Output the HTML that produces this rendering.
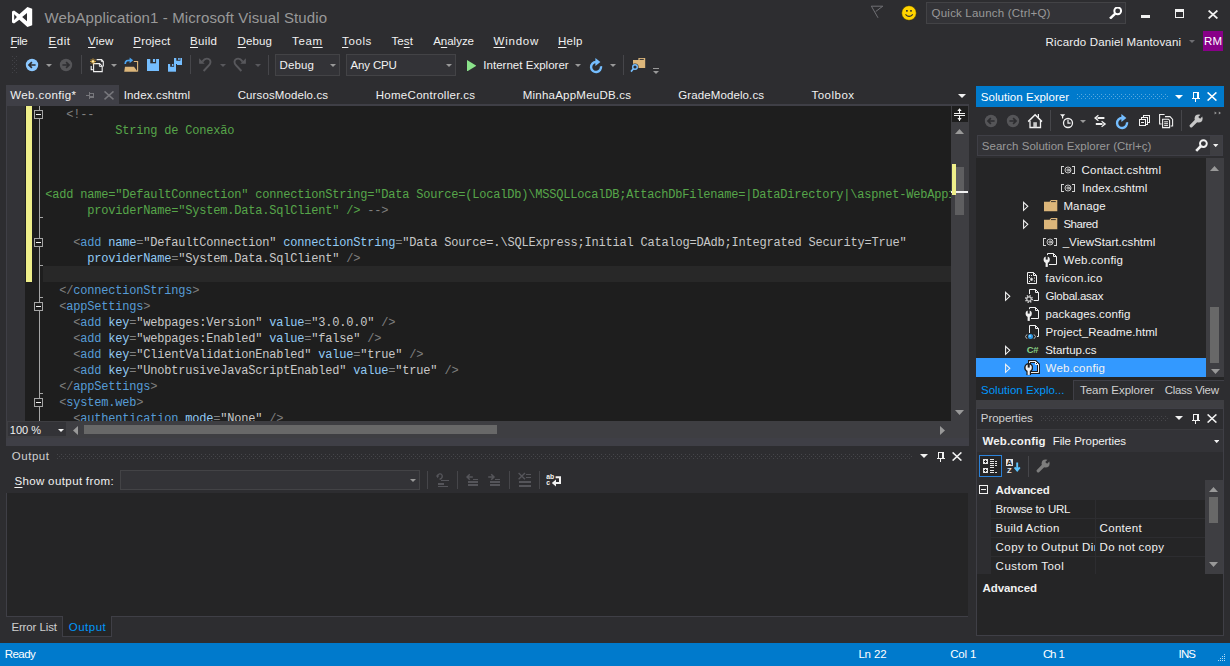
<!DOCTYPE html>
<html><head><meta charset="utf-8"><title>WebApplication1 - Microsoft Visual Studio</title>
<style>
html,body{margin:0;padding:0;background:#2d2d30;}
body{width:1230px;height:666px;position:relative;overflow:hidden;font-family:"Liberation Sans",sans-serif;}
.t{position:absolute;white-space:pre;font-family:"Liberation Sans",sans-serif;}
.r{position:absolute;display:block;}
.c{position:absolute;white-space:pre;font-family:"Liberation Mono",monospace;font-size:12px;line-height:16px;letter-spacing:-0.2px;height:16px;}
u{text-decoration:underline;text-underline-offset:1.5px;text-decoration-thickness:1px;}
.g{color:#808080}.e{color:#569cd6}.a{color:#92caf4}.v{color:#c8c8c8}.k{color:#57a64a}
</style></head><body>
<svg class="r" style="left:12px;top:7px" width="21" height="21" viewBox="0 0 21 21"><path d="M15.4 0 L20.2 1.8 V18.2 L15.4 20 L7.3 12.7 L2 16.5 L0 15.5 V4.5 L2 3.5 L7.3 7.3 Z M2.2 7.2 V13 L4.9 10.1 Z M10.2 10.1 L15 6 V14.2 Z" fill="#fff" fill-rule="evenodd"/></svg>
<span class="t" style="left:44.50px;top:9.80px;font-size:15px;line-height:15px;color:#999999;letter-spacing:0.114px;word-spacing:0.008px;">WebApplication1 - Microsoft Visual Studio</span>
<svg class="r" style="left:870px;top:5px" width="14" height="14" viewBox="0 0 14 14"><path d="M1.2 1.2 H12.8 L5.7 6.5 M1.4 1.2 L8 12.8" fill="none" stroke="#707074" stroke-width="1"/></svg>
<svg class="r" style="left:901px;top:5px" width="16" height="16" viewBox="0 0 16 16"><circle cx="8" cy="8" r="7.3" fill="#ffd400" stroke="#3a3000" stroke-width="0.5"/><rect x="5.1" y="5" width="1.6" height="1.7" fill="#2d2d30"/><rect x="9.2" y="5" width="1.6" height="1.7" fill="#2d2d30"/><path d="M4.5 9.3 Q8 13.4 11.8 9.3" stroke="#2d2d30" stroke-width="1.1" fill="none"/></svg>
<div class="r" style="left:926px;top:2px;width:200px;height:22px;background:#333337;box-sizing:border-box;border:1px solid #434346;"></div>
<span class="t" style="left:931.60px;top:8.47px;font-size:11.5px;line-height:11.5px;color:#999999;letter-spacing:0.216px;word-spacing:-0.123px;">Quick Launch (Ctrl+Q)</span>
<svg class="r" style="left:1109px;top:7px" width="13" height="12" viewBox="0 0 13 12"><circle cx="8.7" cy="3.9" r="3.4" fill="none" stroke="#fff" stroke-width="1.9"/><path d="M6.2 6.6 L1 11.6" stroke="#fff" stroke-width="2.5" stroke-linecap="butt"/></svg>
<div class="r" style="left:1141px;top:15px;width:9px;height:3px;background:#f1f1f1;"></div>
<div class="r" style="left:1175px;top:9px;width:9px;height:9px;background:transparent;box-sizing:border-box;border:1px solid #f1f1f1;border-top-width:3px;"></div>
<svg class="r" style="left:1208px;top:9.5px" width="10" height="9" viewBox="0 0 10 9"><path d="M0.6 0.5 L9.4 8.5 M9.4 0.5 L0.6 8.5" stroke="#f1f1f1" stroke-width="1.7"/></svg>
<span class="t" style="left:10.50px;top:35.67px;font-size:11.5px;line-height:11.5px;color:#f1f1f1;letter-spacing:-0.475px;"><u>F</u>ile</span>
<span class="t" style="left:48.50px;top:35.67px;font-size:11.5px;line-height:11.5px;color:#f1f1f1;letter-spacing:0.562px;"><u>E</u>dit</span>
<span class="t" style="left:88.00px;top:35.67px;font-size:11.5px;line-height:11.5px;color:#f1f1f1;letter-spacing:0.184px;"><u>V</u>iew</span>
<span class="t" style="left:133.30px;top:35.67px;font-size:11.5px;line-height:11.5px;color:#f1f1f1;letter-spacing:0.202px;"><u>P</u>roject</span>
<span class="t" style="left:190.00px;top:35.67px;font-size:11.5px;line-height:11.5px;color:#f1f1f1;letter-spacing:0.356px;"><u>B</u>uild</span>
<span class="t" style="left:237.50px;top:35.67px;font-size:11.5px;line-height:11.5px;color:#f1f1f1;letter-spacing:0.152px;"><u>D</u>ebug</span>
<span class="t" style="left:292.00px;top:35.67px;font-size:11.5px;line-height:11.5px;color:#f1f1f1;letter-spacing:0.628px;">Tea<u>m</u></span>
<span class="t" style="left:342.00px;top:35.67px;font-size:11.5px;line-height:11.5px;color:#f1f1f1;letter-spacing:0.615px;"><u>T</u>ools</span>
<span class="t" style="left:391.50px;top:35.67px;font-size:11.5px;line-height:11.5px;color:#f1f1f1;letter-spacing:0.070px;">Te<u>s</u>t</span>
<span class="t" style="left:433.20px;top:35.67px;font-size:11.5px;line-height:11.5px;color:#f1f1f1;letter-spacing:-0.019px;">A<u>n</u>alyze</span>
<span class="t" style="left:493.50px;top:35.67px;font-size:11.5px;line-height:11.5px;color:#f1f1f1;letter-spacing:0.774px;"><u>W</u>indow</span>
<span class="t" style="left:558.00px;top:35.67px;font-size:11.5px;line-height:11.5px;color:#f1f1f1;letter-spacing:0.282px;"><u>H</u>elp</span>
<span class="t" style="left:1045.60px;top:36.57px;font-size:11.5px;line-height:11.5px;color:#f1f1f1;letter-spacing:0.169px;word-spacing:-0.076px;">Ricardo Daniel Mantovani</span>
<svg class="r" style="left:1189px;top:40px" width="6" height="3" viewBox="0 0 6 3"><path d="M0 0H6L3.0 3Z" fill="#6e6e72"/></svg>
<div class="r" style="left:1203px;top:31px;width:20px;height:20px;background:#880088;"></div>
<span class="t" style="left:1204.00px;top:35.87px;font-size:11.5px;line-height:11.5px;color:#fff;letter-spacing:0.117px;">RM</span>
<svg class="r" style="left:12px;top:56px" width="5" height="17"><defs><pattern id="gp1" width="4" height="4" patternUnits="userSpaceOnUse"><rect x="0" y="0" width="1" height="1" fill="#424247"/><rect x="2" y="2" width="1" height="1" fill="#424247"/></pattern></defs><rect width="5" height="17" fill="url(#gp1)"/></svg>
<svg class="r" style="left:25.1px;top:57.7px" width="14" height="14" viewBox="0 0 14 14"><circle cx="7" cy="7" r="6.2" fill="#8cc8ff"/><path d="M10.6 7 H4.2 M6.9 4.2 L4 7 L6.9 9.8" stroke="#2d2d30" stroke-width="1.7" fill="none"/></svg>
<svg class="r" style="left:46px;top:64px" width="6" height="3" viewBox="0 0 6 3"><path d="M0 0H6L3.0 3Z" fill="#999"/></svg>
<svg class="r" style="left:58.900000000000006px;top:57.7px" width="14" height="14" viewBox="0 0 14 14"><circle cx="7" cy="7" r="6.2" fill="#555558"/><path d="M3.4 7 H9.8 M7.1 4.2 L10 7 L7.1 9.8" stroke="#2d2d30" stroke-width="1.7" fill="none"/></svg>
<div class="r" style="left:81px;top:55px;width:1px;height:19px;background:#46464a;"></div>
<svg class="r" style="left:89px;top:57px" width="16" height="16" viewBox="0 0 16 16"><g fill="none" stroke="#f1f1f1" stroke-width="1.1"><path d="M7.6 2.6 H12.6 L14.3 4.4 V9.6"/><path d="M12.4 2.8 V4.6 H14.2" stroke-width="0.9"/><path d="M4.6 6.6 H10.6 L13.2 9.2 V14.6 H4.6 Z"/><path d="M10.4 6.8 V9.4 H13" stroke-width="0.9"/><path d="M3.8 12.6 H2.2 V9"/></g><path d="M4 1.4 V7.4 M1 4.4 H7 M1.9 2.3 L6.1 6.5 M6.1 2.3 L1.9 6.5" stroke="#e0a838" stroke-width="0.9"/><circle cx="4" cy="4.4" r="1.2" fill="#ffe9a8"/></svg>
<svg class="r" style="left:111px;top:64px" width="6" height="3" viewBox="0 0 6 3"><path d="M0 0H6L3.0 3Z" fill="#999"/></svg>
<svg class="r" style="left:123px;top:57px" width="16" height="16" viewBox="0 0 16 16"><path d="M10.8 4.5 H14.6 V14.4" fill="none" stroke="#dcb67a" stroke-width="1.1"/><path d="M2 9.8 H11 L14.7 14.8 H1.2 Z" fill="#dcb67a"/><path d="M2.2 7 C2.2 3.6 4.4 3.2 7.4 3.3" fill="none" stroke="#4aa3f0" stroke-width="1.7"/><path d="M6.6 0.4 L10.2 3.3 L6.6 6.2 Z" fill="#4aa3f0"/></svg>
<svg class="r" style="left:147px;top:59.2px" width="12.1" height="12" viewBox="0 0 12.1 12"><rect x="0" y="0" width="12.1" height="12" fill="#75beff"/><rect x="3.267" y="0" width="5.808" height="4.32" fill="#2d2d30"/><rect x="5.928999999999999" y="0" width="2.178" height="3.0" fill="#75beff"/></svg>
<svg class="r" style="left:173.9px;top:57.8px" width="8.5" height="7.6" viewBox="0 0 8.5 7.6"><rect x="0" y="0" width="8.5" height="7.6" fill="#75beff"/><rect x="2.295" y="0" width="4.08" height="2.7359999999999998" fill="#2d2d30"/><rect x="4.165" y="0" width="1.53" height="1.9" fill="#75beff"/></svg>
<div class="r" style="left:173.5px;top:63.6px;width:3px;height:2px;background:#2d2d30;"></div>
<svg class="r" style="left:168px;top:64px" width="8.1" height="7.7" viewBox="0 0 8.1 7.7"><rect x="0" y="0" width="8.1" height="7.7" fill="#75beff"/><rect x="2.187" y="0" width="3.888" height="2.772" fill="#2d2d30"/><rect x="3.969" y="0" width="1.458" height="1.925" fill="#75beff"/></svg>
<div class="r" style="left:190px;top:55px;width:1px;height:19px;background:#46464a;"></div>
<svg class="r" style="left:198px;top:57px" width="14" height="15" viewBox="0 0 14 15"><path d="M1.1 1.2 V6.8 H6.7 Z" fill="#58585c"/><path d="M4.4 4.6 C6 2.2 8.4 1.3 10.2 1.9 C12.6 2.7 13 5.2 11.8 7.2 C10.6 9 8 11.4 5.6 14" fill="none" stroke="#58585c" stroke-width="1.9"/></svg>
<svg class="r" style="left:220px;top:64px" width="6" height="3" viewBox="0 0 6 3"><path d="M0 0H6L3.0 3Z" fill="#58585c"/></svg>
<svg class="r" style="left:233px;top:57px" width="14" height="15" viewBox="0 0 14 15"><path d="M12.9 1.2 V6.8 H7.3 Z" fill="#58585c"/><path d="M9.6 4.6 C8 2.2 5.6 1.3 3.8 1.9 C1.4 2.7 1 5.2 2.2 7.2 C3.4 9 6 11.4 8.4 14" fill="none" stroke="#58585c" stroke-width="1.9"/></svg>
<svg class="r" style="left:255px;top:64px" width="6" height="3" viewBox="0 0 6 3"><path d="M0 0H6L3.0 3Z" fill="#58585c"/></svg>
<div class="r" style="left:267.5px;top:55px;width:1px;height:20px;background:#46464a;"></div>
<div class="r" style="left:275px;top:54px;width:65px;height:22px;background:#333337;box-sizing:border-box;border:1px solid #434346;"></div>
<span class="t" style="left:279.50px;top:59.67px;font-size:11.5px;line-height:11.5px;color:#f1f1f1;letter-spacing:0.102px;">Debug</span>
<svg class="r" style="left:330px;top:64px" width="6" height="3" viewBox="0 0 6 3"><path d="M0 0H6L3.0 3Z" fill="#999"/></svg>
<div class="r" style="left:346px;top:54px;width:110px;height:22px;background:#333337;box-sizing:border-box;border:1px solid #434346;"></div>
<span class="t" style="left:350.60px;top:59.77px;font-size:11.5px;line-height:11.5px;color:#f1f1f1;letter-spacing:-0.256px;word-spacing:0.349px;">Any CPU</span>
<svg class="r" style="left:446px;top:64px" width="6" height="3" viewBox="0 0 6 3"><path d="M0 0H6L3.0 3Z" fill="#999"/></svg>
<svg class="r" style="left:466.5px;top:59.5px" width="9.5" height="11.5" viewBox="0 0 9.5 11.5"><path d="M0 0 L9.5 5.75 L0 11.5 Z" fill="#8ae28a"/></svg>
<span class="t" style="left:483.30px;top:59.77px;font-size:11.5px;line-height:11.5px;color:#f1f1f1;letter-spacing:0.019px;word-spacing:0.074px;">Internet Explorer</span>
<svg class="r" style="left:575px;top:64px" width="6" height="3" viewBox="0 0 6 3"><path d="M0 0H6L3.0 3Z" fill="#999"/></svg>
<svg class="r" style="left:588px;top:57.400000000000006px" width="16" height="17" viewBox="0 -1 16 17"><path d="M13.0 8.2 A5 5 0 1 1 8 4" fill="none" stroke="#75beff" stroke-width="2.4"/><path d="M7.4 0 L12.4 4 L7.4 8 Z" fill="#75beff"/></svg>
<svg class="r" style="left:610px;top:64px" width="6" height="3" viewBox="0 0 6 3"><path d="M0 0H6L3.0 3Z" fill="#999"/></svg>
<div class="r" style="left:623px;top:55px;width:1px;height:20px;background:#46464a;"></div>
<svg class="r" style="left:630px;top:57px" width="17" height="16" viewBox="0 0 17 16"><path d="M3 3 H8.4 V1.1 H15.2 V10.9 H3 Z" fill="#dcb67a"/><path d="M9.6 2.4 H13.8" stroke="#2d2d30" stroke-width="1"/><circle cx="5" cy="10" r="3.6" fill="#2d2d30"/><circle cx="5" cy="10" r="2.3" fill="#2d2d30" stroke="#75beff" stroke-width="1.4"/><path d="M3.4 11.8 L1 14.6" stroke="#75beff" stroke-width="1.7"/></svg>
<div class="r" style="left:653px;top:68px;width:6px;height:1px;background:#999;"></div>
<svg class="r" style="left:653px;top:71px" width="6" height="3" viewBox="0 0 6 3"><path d="M0 0H6L3.0 3Z" fill="#999"/></svg>
<div class="r" style="left:6px;top:85px;width:113px;height:19px;background:#3f3f46;"></div>
<div class="r" style="left:6px;top:104px;width:963px;height:2px;background:#3f3f46;"></div>
<span class="t" style="left:10.30px;top:90.17px;font-size:11.5px;line-height:11.5px;color:#f1f1f1;letter-spacing:0.390px;">Web.config*</span>
<svg class="r" style="left:86px;top:92px" width="8" height="7" viewBox="0 0 8 7"><g fill="#77777c" shape-rendering="crispEdges"><rect x="0" y="3" width="3" height="1"/><rect x="3" y="0" width="1" height="7"/><rect x="4" y="1" width="4" height="1"/><rect x="7" y="1" width="1" height="5"/><rect x="4" y="4" width="4" height="2"/></g></svg>
<svg class="r" style="left:104px;top:91px" width="10" height="9" viewBox="0 0 10 9"><path d="M0.5 0.4 L9.5 8.4 M9.5 0.4 L0.5 8.4" stroke="#77777c" stroke-width="1.5"/></svg>
<span class="t" style="left:123.70px;top:90.17px;font-size:11.5px;line-height:11.5px;color:#f1f1f1;letter-spacing:0.159px;">Index.cshtml</span>
<span class="t" style="left:237.70px;top:90.17px;font-size:11.5px;line-height:11.5px;color:#f1f1f1;letter-spacing:0.104px;">CursosModelo.cs</span>
<span class="t" style="left:375.70px;top:90.17px;font-size:11.5px;line-height:11.5px;color:#f1f1f1;letter-spacing:0.295px;">HomeController.cs</span>
<span class="t" style="left:522.70px;top:90.17px;font-size:11.5px;line-height:11.5px;color:#f1f1f1;letter-spacing:0.232px;">MinhaAppMeuDB.cs</span>
<span class="t" style="left:678.30px;top:90.17px;font-size:11.5px;line-height:11.5px;color:#f1f1f1;letter-spacing:0.102px;">GradeModelo.cs</span>
<span class="t" style="left:811.50px;top:90.17px;font-size:11.5px;line-height:11.5px;color:#f1f1f1;letter-spacing:0.477px;">Toolbox</span>
<svg class="r" style="left:958px;top:94px" width="8" height="4" viewBox="0 0 8 4"><path d="M0 0H8L4.0 4Z" fill="#f1f1f1"/></svg>
<div class="r" style="left:6px;top:106px;width:945px;height:315px;background:#1e1e1e;"></div>
<div class="r" style="left:6px;top:106px;width:1px;height:315px;background:#3f3f46;"></div>
<div class="r" style="left:7px;top:106px;width:18px;height:315px;background:#333337;"></div>
<div class="r" style="left:26px;top:106px;width:6px;height:176px;background:#efef8a;"></div>
<div class="r" style="left:43px;top:266px;width:908px;height:16px;background:#282828;"></div>
<div class="r" style="left:39px;top:106px;width:1px;height:315px;background:#a5a5a5;"></div>
<div class="r" style="left:39px;top:217px;width:4px;height:1px;background:#a5a5a5;"></div>
<div class="r" style="left:39px;top:265px;width:4px;height:1px;background:#a5a5a5;"></div>
<div class="r" style="left:39px;top:297px;width:4px;height:1px;background:#a5a5a5;"></div>
<div class="r" style="left:39px;top:393px;width:4px;height:1px;background:#a5a5a5;"></div>
<div class="r" style="left:34px;top:110px;width:9px;height:9px;background:#1e1e1e;box-sizing:border-box;border:1px solid #a5a5a5;"></div>
<div class="r" style="left:36px;top:113.5px;width:5px;height:1.6px;background:#f1f1f1;"></div>
<div class="r" style="left:34px;top:238px;width:9px;height:9px;background:#1e1e1e;box-sizing:border-box;border:1px solid #a5a5a5;"></div>
<div class="r" style="left:36px;top:241.5px;width:5px;height:1.6px;background:#f1f1f1;"></div>
<div class="r" style="left:34px;top:302px;width:9px;height:9px;background:#1e1e1e;box-sizing:border-box;border:1px solid #a5a5a5;"></div>
<div class="r" style="left:36px;top:305.5px;width:5px;height:1.6px;background:#f1f1f1;"></div>
<div class="r" style="left:34px;top:398px;width:9px;height:9px;background:#1e1e1e;box-sizing:border-box;border:1px solid #a5a5a5;"></div>
<div class="r" style="left:36px;top:401.5px;width:5px;height:1.6px;background:#f1f1f1;"></div>
<div class="c" style="left:66.20px;top:107px;"><span class="g">&lt;!--</span></div>
<div class="c" style="left:115.20px;top:123px;"><span class="k">String de Conexão</span></div>
<div class="c" style="left:45.20px;top:187px;width:905.8px;overflow:hidden;"><span class="k">&lt;add name=&quot;DefaultConnection&quot; connectionString=&quot;Data Source=(LocalDb)\MSSQLLocalDB;AttachDbFilename=|DataDirectory|\aspnet-WebApp1-20150420</span></div>
<div class="c" style="left:87.20px;top:203px;"><span class="k">providerName=&quot;System.Data.SqlClient&quot; /&gt;</span><span class="g"> --&gt;</span></div>
<div class="c" style="left:73.20px;top:235px;"><span class="g">&lt;</span><span class="e">add</span> <span class="a">name</span><span class="g">=</span><span class="v">&quot;DefaultConnection&quot;</span> <span class="a">connectionString</span><span class="g">=</span><span class="v">&quot;Data Source=.\SQLExpress;Initial Catalog=DAdb;Integrated Security=True&quot;</span></div>
<div class="c" style="left:87.20px;top:251px;"><span class="a">providerName</span><span class="g">=</span><span class="v">&quot;System.Data.SqlClient&quot;</span><span class="g"> /&gt;</span></div>
<div class="c" style="left:59.20px;top:283px;"><span class="g">&lt;/</span><span class="e">connectionStrings</span><span class="g">&gt;</span></div>
<div class="c" style="left:59.20px;top:299px;"><span class="g">&lt;</span><span class="e">appSettings</span><span class="g">&gt;</span></div>
<div class="c" style="left:73.20px;top:315px;"><span class="g">&lt;</span><span class="e">add</span> <span class="a">key</span><span class="g">=</span><span class="v">&quot;webpages:Version&quot;</span> <span class="a">value</span><span class="g">=</span><span class="v">&quot;3.0.0.0&quot;</span><span class="g"> /&gt;</span></div>
<div class="c" style="left:73.20px;top:331px;"><span class="g">&lt;</span><span class="e">add</span> <span class="a">key</span><span class="g">=</span><span class="v">&quot;webpages:Enabled&quot;</span> <span class="a">value</span><span class="g">=</span><span class="v">&quot;false&quot;</span><span class="g"> /&gt;</span></div>
<div class="c" style="left:73.20px;top:347px;"><span class="g">&lt;</span><span class="e">add</span> <span class="a">key</span><span class="g">=</span><span class="v">&quot;ClientValidationEnabled&quot;</span> <span class="a">value</span><span class="g">=</span><span class="v">&quot;true&quot;</span><span class="g"> /&gt;</span></div>
<div class="c" style="left:73.20px;top:363px;"><span class="g">&lt;</span><span class="e">add</span> <span class="a">key</span><span class="g">=</span><span class="v">&quot;UnobtrusiveJavaScriptEnabled&quot;</span> <span class="a">value</span><span class="g">=</span><span class="v">&quot;true&quot;</span><span class="g"> /&gt;</span></div>
<div class="c" style="left:59.20px;top:379px;"><span class="g">&lt;/</span><span class="e">appSettings</span><span class="g">&gt;</span></div>
<div class="c" style="left:59.20px;top:395px;"><span class="g">&lt;</span><span class="e">system.web</span><span class="g">&gt;</span></div>
<div class="c" style="left:73.20px;top:411px;"><span class="g">&lt;</span><span class="e">authentication</span> <span class="a">mode</span><span class="g">=</span><span class="v">&quot;None&quot;</span><span class="g"> /&gt;</span></div>
<div class="r" style="left:6px;top:421px;width:963px;height:25px;background:#3e3e42;"></div>
<div class="r" style="left:6px;top:438px;width:963px;height:8px;background:#3f3f46;"></div>
<div class="r" style="left:951px;top:106px;width:18px;height:315px;background:#3e3e42;"></div>
<div class="r" style="left:952px;top:106px;width:16px;height:16px;background:#1e1e1e;"></div>
<svg class="r" style="left:954px;top:108px" width="12" height="13" viewBox="0 0 12 13"><path d="M0 5.5 H11 M0 7.5 H11 M5.5 0.5 V5 M5.5 8 V12.5" stroke="#f1f1f1" stroke-width="1" shape-rendering="crispEdges"/><path d="M3.3 3 L5.5 0.3 L7.7 3 Z M3.3 10 L5.5 12.7 L7.7 10 Z" fill="#f1f1f1"/></svg>
<svg class="r" style="left:955px;top:129px" width="9" height="5" viewBox="0 0 9 5"><path d="M0 5 L4.5 0 L9 5 Z" fill="#999"/></svg>
<svg class="r" style="left:955px;top:410px" width="9" height="5" viewBox="0 0 9 5"><path d="M0 0 L4.5 5 L9 0 Z" fill="#999"/></svg>
<div class="r" style="left:955px;top:167px;width:9px;height:48px;background:#5e5e60;"></div>
<div class="r" style="left:952px;top:164px;width:4px;height:31px;background:#efef8a;"></div>
<div class="r" style="left:951px;top:191px;width:17px;height:2px;background:#f1f1f1;"></div>
<div class="r" style="left:952px;top:191px;width:4px;height:2px;background:#efef8a;"></div>
<div class="r" style="left:8px;top:422px;width:58px;height:14px;background:#333337;"></div>
<span class="t" style="left:9.80px;top:425.29px;font-size:11px;line-height:11px;color:#f1f1f1;letter-spacing:-0.025px;word-spacing:0.114px;">100 %</span>
<svg class="r" style="left:58px;top:429px" width="6" height="3" viewBox="0 0 6 3"><path d="M0 0H6L3.0 3Z" fill="#f1f1f1"/></svg>
<svg class="r" style="left:73px;top:425.5px" width="5" height="9" viewBox="0 0 5 9"><path d="M5 0 L0 4.5 L5 9 Z" fill="#999"/></svg>
<svg class="r" style="left:940px;top:425.5px" width="5" height="9" viewBox="0 0 5 9"><path d="M0 0 L5 4.5 L0 9 Z" fill="#999"/></svg>
<div class="r" style="left:84px;top:425px;width:413px;height:9px;background:#686868;"></div>
<div class="r" style="left:6px;top:446px;width:962px;height:171px;background:#2d2d30;"></div>
<span class="t" style="left:11.80px;top:451.37px;font-size:11.5px;line-height:11.5px;color:#d0d0d0;letter-spacing:0.535px;">Output</span>
<svg class="r" style="left:57px;top:454px" width="855" height="5"><defs><pattern id="gp2" width="4" height="4" patternUnits="userSpaceOnUse"><rect x="0" y="0" width="1" height="1" fill="#46464a"/><rect x="2" y="2" width="1" height="1" fill="#46464a"/></pattern></defs><rect width="855" height="5" fill="url(#gp2)"/></svg>
<svg class="r" style="left:920px;top:454px" width="8" height="4" viewBox="0 0 8 4"><path d="M0 0H8L4.0 4Z" fill="#f1f1f1"/></svg>
<svg class="r" style="left:937px;top:452px" width="8" height="10" viewBox="0 0 8 10"><g fill="#f1f1f1" shape-rendering="crispEdges"><rect x="1" y="0" width="6" height="1"/><rect x="1" y="0" width="1" height="6"/><rect x="5" y="0" width="2" height="6"/><rect x="0" y="6" width="8" height="1"/><rect x="3" y="7" width="1" height="3.6"/></g></svg>
<svg class="r" style="left:952.3px;top:451.8px" width="10" height="9" viewBox="0 0 10 9"><path d="M0.6 0.4 L9.4 8.6 M9.4 0.4 L0.6 8.6" stroke="#f1f1f1" stroke-width="1.5"/></svg>
<span class="t" style="left:14.40px;top:475.67px;font-size:11.5px;line-height:11.5px;color:#f1f1f1;letter-spacing:0.414px;word-spacing:-0.321px;"><u>S</u>how output from:</span>
<div class="r" style="left:120px;top:470px;width:300px;height:20px;background:#333337;box-sizing:border-box;border:1px solid #434346;"></div>
<svg class="r" style="left:410px;top:479px" width="6" height="3" viewBox="0 0 6 3"><path d="M0 0H6L3.0 3Z" fill="#999"/></svg>
<div class="r" style="left:427px;top:471px;width:1px;height:18px;background:#46464a;"></div>
<div class="r" style="left:457px;top:471px;width:1px;height:18px;background:#46464a;"></div>
<div class="r" style="left:509px;top:471px;width:1px;height:18px;background:#46464a;"></div>
<div class="r" style="left:539px;top:471px;width:1px;height:18px;background:#46464a;"></div>
<svg class="r" style="left:436px;top:472px" width="14" height="16" viewBox="0 0 14 16"><path d="M1.2 4.6 C1.6 1.4 5.4 0.8 6.2 3.6 C6.6 5.2 5.4 6.6 3.6 7.4" fill="none" stroke="#55555a" stroke-width="1.3"/><path d="M0 3.6 H3.2 L1.6 6.2 Z" fill="#55555a"/><g shape-rendering="crispEdges" stroke="#55555a"><path d="M5 8.5 H13" stroke-width="1"/><path d="M2 12 H7.5" stroke-width="2.4"/><path d="M2 14.5 H12" stroke-width="1"/></g></svg>
<svg class="r" style="left:466px;top:472px" width="14" height="16" viewBox="0 0 14 16"><path d="M6.8 5 H1.4 M3.8 2.2 L1 5 L3.8 7.8" fill="none" stroke="#55555a" stroke-width="1.5"/><g shape-rendering="crispEdges" stroke="#55555a" stroke-width="1"><path d="M7 7.5 H12"/><path d="M2 9.5 H12 M2 10.5 H12" /><path d="M2 12.5 H12 M2 13.5 H12"/></g></svg>
<svg class="r" style="left:488px;top:472px" width="14" height="16" viewBox="0 0 14 16"><path d="M0.2 5 H5.6 M3.2 2.2 L6 5 L3.2 7.8" fill="none" stroke="#55555a" stroke-width="1.5"/><g shape-rendering="crispEdges" stroke="#55555a" stroke-width="1"><path d="M7 7.5 H12"/><path d="M2 9.5 H12 M2 10.5 H12"/><path d="M2 12.5 H12 M2 13.5 H12"/></g></svg>
<svg class="r" style="left:518px;top:472px" width="14" height="16" viewBox="0 0 14 16"><path d="M0.6 1 L7 7.2 M7 1 L0.6 7.2" stroke="#55555a" stroke-width="1.4"/><g shape-rendering="crispEdges" stroke="#55555a"><path d="M8 2.5 H13.4 M8 5.5 H13.4" stroke-width="1"/><path d="M0.5 10 H13.4 M0.5 13.5 H13.4" stroke-width="2"/></g></svg>
<svg class="r" style="left:546px;top:473px" width="16" height="14" viewBox="0 0 16 14"><text x="0.2" y="5.8" font-family="Liberation Sans" font-size="6.8" font-weight="bold" fill="#f1f1f1">ab</text><text x="0.2" y="12" font-family="Liberation Sans" font-size="6.8" font-weight="bold" fill="#f1f1f1">c</text><path d="M9.6 4.2 H14 V10 H9.4" fill="none" stroke="#f1f1f1" stroke-width="2"/><path d="M10 6.4 L5.8 10 L10 13.6 Z" fill="#f1f1f1"/></svg>
<div class="r" style="left:6px;top:493px;width:962px;height:124px;background:#252526;box-sizing:border-box;border:1px solid #3f3f46;border-top:none;border-right:none;"></div>
<span class="t" style="left:11.40px;top:621.87px;font-size:11.5px;line-height:11.5px;color:#d0d0d0;letter-spacing:-0.142px;word-spacing:0.235px;">Error List</span>
<div class="r" style="left:62px;top:616px;width:50px;height:21px;background:#252526;box-sizing:border-box;border:1px solid #3f3f46;border-top:none;"></div>
<span class="t" style="left:68.80px;top:621.87px;font-size:11.5px;line-height:11.5px;color:#0097fb;letter-spacing:0.475px;">Output</span>
<div class="r" style="left:0px;top:643px;width:1230px;height:23px;background:#007acc;"></div>
<span class="t" style="left:4.80px;top:649.47px;font-size:11.5px;line-height:11.5px;color:#fff;letter-spacing:-0.562px;">Ready</span>
<span class="t" style="left:858.40px;top:649.47px;font-size:11.5px;line-height:11.5px;color:#fff;letter-spacing:-0.222px;word-spacing:0.315px;">Ln 22</span>
<span class="t" style="left:950.30px;top:649.47px;font-size:11.5px;line-height:11.5px;color:#fff;letter-spacing:-0.311px;word-spacing:0.404px;">Col 1</span>
<span class="t" style="left:1043.00px;top:649.47px;font-size:11.5px;line-height:11.5px;color:#fff;letter-spacing:-1.190px;word-spacing:1.283px;">Ch 1</span>
<span class="t" style="left:1178.60px;top:649.47px;font-size:11.5px;line-height:11.5px;color:#fff;letter-spacing:-0.885px;">INS</span>
<svg class="r" style="left:1218px;top:654px" width="8" height="8" viewBox="0 0 8 8"><rect x="6" y="0" width="1" height="1" fill="#b4dcf5"/><rect x="4" y="2" width="1" height="1" fill="#b4dcf5"/><rect x="6" y="2" width="1" height="1" fill="#b4dcf5"/><rect x="2" y="4" width="1" height="1" fill="#b4dcf5"/><rect x="4" y="4" width="1" height="1" fill="#b4dcf5"/><rect x="6" y="4" width="1" height="1" fill="#b4dcf5"/><rect x="0" y="6" width="1" height="1" fill="#b4dcf5"/><rect x="2" y="6" width="1" height="1" fill="#b4dcf5"/><rect x="4" y="6" width="1" height="1" fill="#b4dcf5"/><rect x="6" y="6" width="1" height="1" fill="#b4dcf5"/></svg>
<div class="r" style="left:976px;top:86px;width:248px;height:21px;background:#007acc;"></div>
<span class="t" style="left:980.80px;top:91.87px;font-size:11.5px;line-height:11.5px;color:#fff;letter-spacing:0.036px;word-spacing:0.057px;">Solution Explorer</span>
<svg class="r" style="left:1077px;top:94px" width="91" height="5"><defs><pattern id="gp3" width="4" height="4" patternUnits="userSpaceOnUse"><rect x="0" y="0" width="1" height="1" fill="#59a8de"/><rect x="2" y="2" width="1" height="1" fill="#59a8de"/></pattern></defs><rect width="91" height="5" fill="url(#gp3)"/></svg>
<svg class="r" style="left:1175px;top:94.5px" width="8" height="4" viewBox="0 0 8 4"><path d="M0 0H8L4.0 4Z" fill="#fff"/></svg>
<svg class="r" style="left:1192px;top:92px" width="8" height="10" viewBox="0 0 8 10"><g fill="#fff" shape-rendering="crispEdges"><rect x="1" y="0" width="6" height="1"/><rect x="1" y="0" width="1" height="6"/><rect x="5" y="0" width="2" height="6"/><rect x="0" y="6" width="8" height="1"/><rect x="3" y="7" width="1" height="3.6"/></g></svg>
<svg class="r" style="left:1207.3px;top:92px" width="10" height="9" viewBox="0 0 10 9"><path d="M0.6 0.4 L9.4 8.6 M9.4 0.4 L0.6 8.6" stroke="#fff" stroke-width="1.5"/></svg>
<div class="r" style="left:976px;top:107px;width:247px;height:28px;background:#2d2d30;"></div>
<svg class="r" style="left:984px;top:114px" width="14" height="14" viewBox="0 0 14 14"><circle cx="7" cy="7" r="6.2" fill="#555558"/><path d="M10.6 7 H4.2 M6.9 4.2 L4 7 L6.9 9.8" stroke="#2d2d30" stroke-width="1.7" fill="none"/></svg>
<svg class="r" style="left:1006px;top:114px" width="14" height="14" viewBox="0 0 14 14"><circle cx="7" cy="7" r="6.2" fill="#555558"/><path d="M3.4 7 H9.8 M7.1 4.2 L10 7 L7.1 9.8" stroke="#2d2d30" stroke-width="1.7" fill="none"/></svg>
<svg class="r" style="left:1027px;top:113px" width="16" height="16" viewBox="0 0 16 16"><path d="M1.2 8.6 L8.1 1.7 L15 8.6" stroke="#f1f1f1" stroke-width="1.5" fill="none"/><path d="M3 8 V14.5 H13.5 V8" fill="none" stroke="#f1f1f1" stroke-width="1.3"/><rect x="6.3" y="9.2" width="3.6" height="5" fill="#c8c8c8"/><path d="M11.4 1 V4.6" stroke="#f1f1f1" stroke-width="1.2"/></svg>
<div class="r" style="left:1050px;top:110px;width:1px;height:21px;background:#46464a;"></div>
<svg class="r" style="left:1059px;top:113px" width="16" height="16" viewBox="0 0 16 16"><path d="M1 1.2 H6.2 L4.2 3.4 V5.4 H3 V3.4 Z" fill="#f1f1f1"/><circle cx="9" cy="10" r="4.5" fill="none" stroke="#f1f1f1" stroke-width="1.3"/><path d="M9 6.8 V10.2 H11.6" stroke="#f1f1f1" stroke-width="1.2" fill="none"/></svg>
<svg class="r" style="left:1080px;top:120px" width="6" height="3" viewBox="0 0 6 3"><path d="M0 0H6L3.0 3Z" fill="#999"/></svg>
<svg class="r" style="left:1093px;top:114px" width="14" height="14" viewBox="0 0 14 14"><path d="M11.4 4 H4.5" stroke="#f1f1f1" stroke-width="2"/><path d="M5 0.8 L1 4 L5 7.2 L5.8 6.4 L3.4 4 L5.8 1.6 Z" fill="#f1f1f1"/><path d="M2.8 10 H9.5" stroke="#f1f1f1" stroke-width="2"/><path d="M9 6.8 L13.2 10 L9 13.2 L8.2 12.4 L10.8 10 L8.2 7.6 Z" fill="#f1f1f1"/></svg>
<svg class="r" style="left:1114px;top:113.2px" width="16" height="17" viewBox="0 -1 16 17"><path d="M13.0 8.2 A5 5 0 1 1 8 4" fill="none" stroke="#75beff" stroke-width="2.4"/><path d="M7.4 0 L12.4 4 L7.4 8 Z" fill="#75beff"/></svg>
<svg class="r" style="left:1138px;top:114px" width="14" height="14" viewBox="0 0 14 14"><g shape-rendering="crispEdges" fill="none" stroke="#f1f1f1" stroke-width="1"><rect x="1.5" y="5.5" width="6" height="6"/><path d="M3 8.5 H6"/><path d="M3.5 5 V3.5 H9.5 V10.5 H8"/><path d="M5.5 3 V1.5 H11.5 V8.5 H10"/></g></svg>
<svg class="r" style="left:1158px;top:113px" width="16" height="16" viewBox="0 0 16 16"><g fill="none" stroke="#f1f1f1" stroke-width="1.1"><path d="M6.6 1.5 H1.6 V11 H3.6"/><path d="M7 3.6 H12 L14.6 6.4 V13 H12.6"/><path d="M4.6 6.2 H10.4 L11.6 7.4 V14.6 H4.6 Z"/><path d="M6.2 8.8 H10 M6.2 10.7 H10 M6.2 12.6 H10" stroke-width="1"/></g></svg>
<div class="r" style="left:1181px;top:110px;width:1px;height:21px;background:#46464a;"></div>
<svg class="r" style="left:1188.5px;top:114.3px" width="14" height="14" viewBox="0 0 14 14"><path d="M2.2 11.8 L8 6" stroke="#c8c8c8" stroke-width="3.2" stroke-linecap="round"/><circle cx="9.6" cy="4.4" r="4" fill="#c8c8c8"/><path d="M10.2 3.8 L14 0" stroke="#2d2d30" stroke-width="2.6"/></svg>
<svg class="r" style="left:1214px;top:111px" width="8" height="4" viewBox="0 0 8 4"><path d="M0.6 0.4 L2.8 2 L0.6 3.6 Z M4.8 0.4 L7 2 L4.8 3.6 Z" fill="#999"/></svg>
<div class="r" style="left:977px;top:135px;width:246px;height:21px;background:#333337;box-sizing:border-box;border:1px solid #3f3f46;"></div>
<div class="r" style="left:1210px;top:136px;width:12px;height:19px;background:#3e3e42;"></div>
<span class="t" style="left:981.80px;top:140.87px;font-size:11.5px;line-height:11.5px;color:#999999;letter-spacing:0.031px;word-spacing:0.062px;">Search Solution Explorer (Ctrl+ç)</span>
<svg class="r" style="left:1195px;top:139px" width="13" height="13" viewBox="0 0 13 13"><circle cx="8.4" cy="4.6" r="3.4" fill="none" stroke="#f1f1f1" stroke-width="1.9"/><path d="M6 7 L1.2 11.8" stroke="#f1f1f1" stroke-width="2.6"/></svg>
<svg class="r" style="left:1213.3px;top:143.6px" width="5.4" height="3.2" viewBox="0 0 5.4 3.2"><path d="M0 0H5.4L2.7 3.2Z" fill="#f1f1f1"/></svg>
<div class="r" style="left:976px;top:158px;width:248px;height:219px;background:#252526;"></div>
<div class="r" style="left:1206px;top:158px;width:18px;height:222px;background:#3e3e42;"></div>
<svg class="r" style="left:1210.2px;top:166.3px" width="9" height="5" viewBox="0 0 9 5"><path d="M0 5 L4.5 0 L9 5 Z" fill="#999"/></svg>
<svg class="r" style="left:1210.5px;top:368.5px" width="9" height="5" viewBox="0 0 9 5"><path d="M0 0 L4.5 5 L9 0 Z" fill="#999"/></svg>
<div class="r" style="left:1210px;top:307px;width:9px;height:56px;background:#686868;"></div>
<div class="r" style="left:976px;top:358px;width:230px;height:19px;background:#3399ff;"></div>
<svg class="r" style="left:1061px;top:166px" width="15" height="8" viewBox="0 0 15 8"><g fill="none" stroke="#d4d4d4" stroke-width="1"><path d="M3 0.5 H0.5 V7.5 H3" shape-rendering="crispEdges"/><path d="M11 0.5 H13.5 V7.5 H11" shape-rendering="crispEdges"/><circle cx="7" cy="4" r="3" stroke-width="0.9"/><circle cx="7" cy="4" r="1.1" stroke-width="0.9"/><path d="M8.3 2.8 V4.9 Q9 5.6 9.9 4.6" stroke-width="0.8"/></g></svg>
<span class="t" style="left:1081.50px;top:164.87px;font-size:11.5px;line-height:11.5px;color:#f1f1f1;letter-spacing:0.265px;">Contact.cshtml</span>
<svg class="r" style="left:1061px;top:184px" width="15" height="8" viewBox="0 0 15 8"><g fill="none" stroke="#d4d4d4" stroke-width="1"><path d="M3 0.5 H0.5 V7.5 H3" shape-rendering="crispEdges"/><path d="M11 0.5 H13.5 V7.5 H11" shape-rendering="crispEdges"/><circle cx="7" cy="4" r="3" stroke-width="0.9"/><circle cx="7" cy="4" r="1.1" stroke-width="0.9"/><path d="M8.3 2.8 V4.9 Q9 5.6 9.9 4.6" stroke-width="0.8"/></g></svg>
<span class="t" style="left:1082.00px;top:182.87px;font-size:11.5px;line-height:11.5px;color:#f1f1f1;letter-spacing:0.068px;">Index.cshtml</span>
<svg class="r" style="left:1044px;top:200px" width="14" height="12" viewBox="0 0 14 12"><path d="M0 11.2 V1.7 H5.6 L7 0.1 H13.3 V11.2 Z" fill="#dcb67a"/><path d="M7 1.6 H11.8" stroke="#252526" stroke-width="0.9"/></svg>
<svg class="r" style="left:1022.5px;top:200.5px" width="6" height="11" viewBox="0 0 6 11"><path d="M0.6 1.3 L4.8 5.3 L0.6 9.3 Z" fill="none" stroke="#f1f1f1" stroke-width="1.1"/></svg>
<span class="t" style="left:1063.40px;top:200.87px;font-size:11.5px;line-height:11.5px;color:#f1f1f1;letter-spacing:0.148px;">Manage</span>
<svg class="r" style="left:1044px;top:218px" width="14" height="12" viewBox="0 0 14 12"><path d="M0 11.2 V1.7 H5.6 L7 0.1 H13.3 V11.2 Z" fill="#dcb67a"/><path d="M7 1.6 H11.8" stroke="#252526" stroke-width="0.9"/></svg>
<svg class="r" style="left:1022.5px;top:218.5px" width="6" height="11" viewBox="0 0 6 11"><path d="M0.6 1.3 L4.8 5.3 L0.6 9.3 Z" fill="none" stroke="#f1f1f1" stroke-width="1.1"/></svg>
<span class="t" style="left:1063.40px;top:218.87px;font-size:11.5px;line-height:11.5px;color:#f1f1f1;letter-spacing:-0.458px;">Shared</span>
<svg class="r" style="left:1043px;top:238px" width="15" height="8" viewBox="0 0 15 8"><g fill="none" stroke="#d4d4d4" stroke-width="1"><path d="M3 0.5 H0.5 V7.5 H3" shape-rendering="crispEdges"/><path d="M11 0.5 H13.5 V7.5 H11" shape-rendering="crispEdges"/><circle cx="7" cy="4" r="3" stroke-width="0.9"/><circle cx="7" cy="4" r="1.1" stroke-width="0.9"/><path d="M8.3 2.8 V4.9 Q9 5.6 9.9 4.6" stroke-width="0.8"/></g></svg>
<span class="t" style="left:1062.68px;top:236.87px;font-size:11.5px;line-height:11.5px;color:#f1f1f1;letter-spacing:0.050px;">_ViewStart.cshtml</span>
<svg class="r" style="left:1046px;top:252px" width="12" height="14" viewBox="-1 -1 12 14"><path d="M0.5 0.5 H6.5 L9.5 3.5 V11.5 H0.5 Z" fill="none" stroke="#f1f1f1" stroke-width="1"/><path d="M6.5 0.5 V3.5 H9.5" fill="none" stroke="#f1f1f1" stroke-width="1"/></svg>
<svg class="r" style="left:1041.5px;top:255px" width="9.5" height="13.5" viewBox="0 0 9.5 13.5"><g transform="translate(1.5,1.5)"><path d="M3.2 6 V10.6" stroke="#252526" stroke-width="4.6" stroke-linecap="butt"/><circle cx="3.2" cy="3.2" r="4.6" fill="#252526"/><path d="M3.2 5 V10.4" stroke="#f1f1f1" stroke-width="2.2"/><circle cx="3.2" cy="3.2" r="3.1" fill="#f1f1f1"/><rect x="2.2" y="-0.5" width="2" height="3.6" fill="#252526"/></g></svg>
<span class="t" style="left:1063.50px;top:254.87px;font-size:11.5px;line-height:11.5px;color:#f1f1f1;letter-spacing:0.243px;">Web.config</span>
<svg class="r" style="left:1026px;top:271px" width="12" height="14" viewBox="-1 -1 12 14"><path d="M0.5 0.5 H6.5 L9.5 3.5 V11.5 H0.5 Z" fill="none" stroke="#f1f1f1" stroke-width="1"/><path d="M6.5 0.5 V3.5 H9.5" fill="none" stroke="#f1f1f1" stroke-width="1"/></svg>
<svg class="r" style="left:1027px;top:272px" width="10" height="12" viewBox="0 0 10 12"><g fill="#f1f1f1"><rect x="2" y="3" width="1" height="1"/><rect x="4" y="3" width="1" height="1"/><rect x="2" y="5" width="1" height="1"/><rect x="7" y="5.5" width="1" height="1"/><rect x="7" y="8.5" width="1" height="1"/><rect x="2" y="9" width="1" height="1"/><path d="M4.5 5.6 V9 M2.9 7.3 H6.1 M3.4 6.1 L5.6 8.5 M5.6 6.1 L3.4 8.5" stroke="#f1f1f1" stroke-width="0.8"/></g></svg>
<span class="t" style="left:1045.20px;top:272.87px;font-size:11.5px;line-height:11.5px;color:#f1f1f1;letter-spacing:0.296px;">favicon.ico</span>
<svg class="r" style="left:1028px;top:288px" width="12" height="14" viewBox="-1 -1 12 14"><path d="M0.5 0.5 H6.5 L9.5 3.5 V11.5 H0.5 Z" fill="none" stroke="#f1f1f1" stroke-width="1"/><path d="M6.5 0.5 V3.5 H9.5" fill="none" stroke="#f1f1f1" stroke-width="1"/></svg>
<svg class="r" style="left:1024px;top:293.8px" width="10" height="10" viewBox="0 0 10 10"><circle cx="5" cy="5" r="4.9" fill="#252526"/><circle cx="5" cy="5" r="3.1" fill="none" stroke="#c8c8c8" stroke-width="1.9" stroke-dasharray="1.25 1.19"/><circle cx="5" cy="5" r="2.2" fill="none" stroke="#c8c8c8" stroke-width="1.2"/></svg>
<svg class="r" style="left:1004.5px;top:290.5px" width="6" height="11" viewBox="0 0 6 11"><path d="M0.6 1.3 L4.8 5.3 L0.6 9.3 Z" fill="none" stroke="#f1f1f1" stroke-width="1.1"/></svg>
<span class="t" style="left:1045.40px;top:290.87px;font-size:11.5px;line-height:11.5px;color:#f1f1f1;letter-spacing:-0.263px;">Global.asax</span>
<svg class="r" style="left:1028px;top:306px" width="12" height="14" viewBox="-1 -1 12 14"><path d="M0.5 0.5 H6.5 L9.5 3.5 V11.5 H0.5 Z" fill="none" stroke="#f1f1f1" stroke-width="1"/><path d="M6.5 0.5 V3.5 H9.5" fill="none" stroke="#f1f1f1" stroke-width="1"/></svg>
<svg class="r" style="left:1023.5px;top:309px" width="9.5" height="13.5" viewBox="0 0 9.5 13.5"><g transform="translate(1.5,1.5)"><path d="M3.2 6 V10.6" stroke="#252526" stroke-width="4.6" stroke-linecap="butt"/><circle cx="3.2" cy="3.2" r="4.6" fill="#252526"/><path d="M3.2 5 V10.4" stroke="#f1f1f1" stroke-width="2.2"/><circle cx="3.2" cy="3.2" r="3.1" fill="#f1f1f1"/><rect x="2.2" y="-0.5" width="2" height="3.6" fill="#252526"/></g></svg>
<span class="t" style="left:1045.40px;top:308.87px;font-size:11.5px;line-height:11.5px;color:#f1f1f1;letter-spacing:0.135px;">packages.config</span>
<svg class="r" style="left:1028px;top:324px" width="12" height="14" viewBox="-1 -1 12 14"><path d="M0.5 0.5 H6.5 L9.5 3.5 V11.5 H0.5 Z" fill="none" stroke="#f1f1f1" stroke-width="1"/><path d="M6.5 0.5 V3.5 H9.5" fill="none" stroke="#f1f1f1" stroke-width="1"/></svg>
<svg class="r" style="left:1024.5px;top:333.4px" width="12" height="7" viewBox="0 0 12 7"><rect x="0" y="0" width="12" height="7" fill="#252526"/><circle cx="5.5" cy="3.6" r="2.5" fill="#2f9be6"/><circle cx="5" cy="3" r="0.9" fill="#9fd4ff"/><path d="M2 1.4 L0.5 3.6 L2 5.8 M9 1.4 L10.5 3.6 L9 5.8" fill="none" stroke="#c8c8c8" stroke-width="0.9"/></svg>
<span class="t" style="left:1045.40px;top:326.87px;font-size:11.5px;line-height:11.5px;color:#f1f1f1;letter-spacing:0.079px;">Project_Readme.html</span>
<span class="t" style="left:1026.80px;top:345.16px;font-size:9.5px;line-height:9.5px;color:#85cf85;letter-spacing:-0.441px;font-weight:bold;">C#</span>
<svg class="r" style="left:1004.5px;top:344.5px" width="6" height="11" viewBox="0 0 6 11"><path d="M0.6 1.3 L4.8 5.3 L0.6 9.3 Z" fill="none" stroke="#f1f1f1" stroke-width="1.1"/></svg>
<span class="t" style="left:1045.20px;top:344.87px;font-size:11.5px;line-height:11.5px;color:#f1f1f1;letter-spacing:-0.053px;">Startup.cs</span>
<svg class="r" style="left:1028px;top:360px" width="12" height="14" viewBox="-1 -1 12 14"><path d="M0.5 0.5 H6.5 L9.5 3.5 V11.5 H0.5 Z" fill="none" stroke="#1e1e1e" stroke-width="3"/><path d="M0.5 0.5 H6.5 L9.5 3.5 V11.5 H0.5 Z" fill="none" stroke="#f1f1f1" stroke-width="1"/><path d="M6.5 0.5 V3.5 H9.5" fill="none" stroke="#f1f1f1" stroke-width="1"/></svg>
<svg class="r" style="left:1023.5px;top:363px" width="9.5" height="13.5" viewBox="0 0 9.5 13.5"><g transform="translate(1.5,1.5)"><path d="M3.2 6 V10.6" stroke="#1e1e1e" stroke-width="4.6" stroke-linecap="butt"/><circle cx="3.2" cy="3.2" r="4.6" fill="#1e1e1e"/><path d="M3.2 5 V10.4" stroke="#f1f1f1" stroke-width="2.2"/><circle cx="3.2" cy="3.2" r="3.1" fill="#f1f1f1"/><rect x="2.2" y="-0.5" width="2" height="3.6" fill="#1e1e1e"/></g></svg>
<svg class="r" style="left:1004.5px;top:362.5px" width="6" height="11" viewBox="0 0 6 11"><path d="M0.6 1.3 L4.8 5.3 L0.6 9.3 Z" fill="none" stroke="#f1f1f1" stroke-width="1.1"/></svg>
<span class="t" style="left:1045.50px;top:362.87px;font-size:11.5px;line-height:11.5px;color:#f1f1f1;letter-spacing:0.243px;">Web.config</span>
<div class="r" style="left:976px;top:377px;width:248px;height:3px;background:#252526;"></div>
<div class="r" style="left:976px;top:377px;width:97px;height:23px;background:#252526;"></div>
<div class="r" style="left:1073px;top:380px;width:151px;height:20px;background:#2d2d30;box-sizing:border-box;border-top:1px solid #3f3f46;border-left:1px solid #3f3f46;"></div>
<div class="r" style="left:976px;top:400px;width:248px;height:8px;background:#3e3e42;"></div>
<span class="t" style="left:981.00px;top:384.57px;font-size:11.5px;line-height:11.5px;color:#0097fb;letter-spacing:0.020px;word-spacing:0.073px;">Solution Explo...</span>
<span class="t" style="left:1080.00px;top:385.07px;font-size:11.5px;line-height:11.5px;color:#d0d0d0;letter-spacing:-0.021px;word-spacing:0.114px;">Team Explorer</span>
<span class="t" style="left:1164.70px;top:385.07px;font-size:11.5px;line-height:11.5px;color:#d0d0d0;letter-spacing:-0.312px;word-spacing:0.405px;">Class View</span>
<div class="r" style="left:976px;top:408px;width:248px;height:228px;background:#252526;box-sizing:border-box;border:1px solid #3f3f46;"></div>
<div class="r" style="left:977px;top:409px;width:246px;height:20px;background:#2d2d30;"></div>
<span class="t" style="left:980.80px;top:413.37px;font-size:11.5px;line-height:11.5px;color:#d0d0d0;letter-spacing:-0.046px;">Properties</span>
<svg class="r" style="left:1041px;top:416px" width="127" height="5"><defs><pattern id="gp4" width="4" height="4" patternUnits="userSpaceOnUse"><rect x="0" y="0" width="1" height="1" fill="#46464a"/><rect x="2" y="2" width="1" height="1" fill="#46464a"/></pattern></defs><rect width="127" height="5" fill="url(#gp4)"/></svg>
<svg class="r" style="left:1175px;top:416px" width="8" height="4" viewBox="0 0 8 4"><path d="M0 0H8L4.0 4Z" fill="#f1f1f1"/></svg>
<svg class="r" style="left:1192px;top:414px" width="8" height="10" viewBox="0 0 8 10"><g fill="#f1f1f1" shape-rendering="crispEdges"><rect x="1" y="0" width="6" height="1"/><rect x="1" y="0" width="1" height="6"/><rect x="5" y="0" width="2" height="6"/><rect x="0" y="6" width="8" height="1"/><rect x="3" y="7" width="1" height="3.6"/></g></svg>
<svg class="r" style="left:1207.3px;top:413.8px" width="10" height="9" viewBox="0 0 10 9"><path d="M0.6 0.4 L9.4 8.6 M9.4 0.4 L0.6 8.6" stroke="#f1f1f1" stroke-width="1.5"/></svg>
<div class="r" style="left:977px;top:429px;width:246px;height:24px;background:#333337;box-sizing:border-box;border-top:1px solid #3a3a3e;border-bottom:1px solid #3a3a3e;"></div>
<span class="t" style="left:982.50px;top:435.87px;font-size:11.5px;line-height:11.5px;color:#f1f1f1;letter-spacing:0.138px;font-weight:bold;">Web.config</span>
<span class="t" style="left:1052.70px;top:435.87px;font-size:11.5px;line-height:11.5px;color:#f1f1f1;letter-spacing:-0.072px;word-spacing:0.165px;">File Properties</span>
<svg class="r" style="left:1214px;top:440px" width="5.4" height="3.2" viewBox="0 0 5.4 3.2"><path d="M0 0H5.4L2.7 3.2Z" fill="#f1f1f1"/></svg>
<div class="r" style="left:977px;top:452px;width:246px;height:28px;background:#2d2d30;"></div>
<div class="r" style="left:979px;top:455px;width:23px;height:22px;background:#252526;box-sizing:border-box;border:1px solid #2b82d9;"></div>
<svg class="r" style="left:983px;top:459px" width="15" height="15" viewBox="0 0 15 15"><g shape-rendering="crispEdges"><rect x="0" y="0" width="5" height="5" fill="#e4e4e4"/><path d="M1 2.5 H4 M2.5 1 V4" stroke="#252526" stroke-width="1"/><rect x="0" y="9" width="5" height="5" fill="#e4e4e4"/><path d="M1 11.5 H4 M2.5 10 V13" stroke="#252526" stroke-width="1"/><path d="M6.5 0.5 H11 M6.5 2.5 H11 M12 2.5 H14 M6.5 4.5 H11 M12 4.5 H14 M6.5 6.5 H11 M12 6.5 H14 M6.5 8.5 H11 M6.5 11.5 H11 M6.5 13.5 H11 M12 13.5 H14" stroke="#e4e4e4" stroke-width="1"/></g></svg>
<svg class="r" style="left:1006px;top:459px" width="15" height="15" viewBox="0 0 15 15"><rect x="0" y="0" width="7" height="7" fill="#e4e4e4"/><text x="0.8" y="6.3" font-family="Liberation Sans" font-size="7.6" font-weight="bold" fill="#252526">A</text><text x="1" y="14" font-family="Liberation Sans" font-size="7.6" font-weight="bold" fill="#e4e4e4">Z</text><path d="M11.2 3.4 V11 M8.6 8.4 L11.2 11.6 L13.8 8.4" fill="none" stroke="#5bc4ff" stroke-width="1.9"/></svg>
<div class="r" style="left:1028px;top:456px;width:1px;height:21px;background:#46464a;"></div>
<svg class="r" style="left:1035.5px;top:458.6px" width="14" height="14" viewBox="0 0 14 14"><path d="M2.2 11.8 L8 6" stroke="#7d7d7d" stroke-width="3.2" stroke-linecap="round"/><circle cx="9.6" cy="4.4" r="4" fill="#7d7d7d"/><path d="M10.2 3.8 L14 0" stroke="#2d2d30" stroke-width="2.6"/></svg>
<div class="r" style="left:977px;top:480px;width:228px;height:94px;background:#2d2d30;"></div>
<div class="r" style="left:991px;top:500px;width:104px;height:18px;background:#252526;"></div>
<div class="r" style="left:1096px;top:500px;width:109px;height:18px;background:#252526;"></div>
<div class="r" style="left:991px;top:519px;width:104px;height:18px;background:#252526;"></div>
<div class="r" style="left:1096px;top:519px;width:109px;height:18px;background:#252526;"></div>
<div class="r" style="left:991px;top:538px;width:104px;height:18px;background:#252526;"></div>
<div class="r" style="left:1096px;top:538px;width:109px;height:18px;background:#252526;"></div>
<div class="r" style="left:991px;top:557px;width:104px;height:17px;background:#252526;"></div>
<div class="r" style="left:1096px;top:557px;width:109px;height:17px;background:#252526;"></div>
<div class="r" style="left:979px;top:485px;width:9px;height:9px;background:#2d2d30;box-sizing:border-box;border:1px solid #f1f1f1;"></div>
<div class="r" style="left:981px;top:489px;width:5px;height:1px;background:#f1f1f1;"></div>
<span class="t" style="left:995.60px;top:484.87px;font-size:11.5px;line-height:11.5px;color:#f1f1f1;letter-spacing:-0.123px;font-weight:bold;">Advanced</span>
<span class="t" style="left:995.60px;top:503.87px;font-size:11.5px;line-height:11.5px;color:#f1f1f1;letter-spacing:-0.272px;word-spacing:0.365px;">Browse to URL</span>
<span class="t" style="left:995.60px;top:522.87px;font-size:11.5px;line-height:11.5px;color:#f1f1f1;letter-spacing:0.361px;word-spacing:-0.268px;">Build Action</span>
<div class="r" style="left:991px;top:538px;width:104px;height:18px;overflow:hidden;">
<span class="t" style="left:4.60px;top:3.87px;font-size:11.5px;line-height:11.5px;color:#f1f1f1;letter-spacing:0.459px;word-spacing:-0.366px;">Copy to Output Directory</span>
</div>
<span class="t" style="left:995.60px;top:560.87px;font-size:11.5px;line-height:11.5px;color:#f1f1f1;letter-spacing:0.477px;word-spacing:-0.384px;">Custom Tool</span>
<span class="t" style="left:1099.60px;top:522.87px;font-size:11.5px;line-height:11.5px;color:#f1f1f1;letter-spacing:0.305px;">Content</span>
<span class="t" style="left:1099.60px;top:541.87px;font-size:11.5px;line-height:11.5px;color:#f1f1f1;letter-spacing:0.344px;word-spacing:-0.251px;">Do not copy</span>
<div class="r" style="left:1205px;top:480px;width:18px;height:94px;background:#3e3e42;"></div>
<svg class="r" style="left:1209px;top:486.5px" width="9" height="5" viewBox="0 0 9 5"><path d="M0 5 L4.5 0 L9 5 Z" fill="#999"/></svg>
<svg class="r" style="left:1209px;top:562px" width="9" height="5" viewBox="0 0 9 5"><path d="M0 0 L4.5 5 L9 0 Z" fill="#999"/></svg>
<div class="r" style="left:1209px;top:497px;width:9px;height:26px;background:#686868;"></div>
<span class="t" style="left:982.50px;top:582.67px;font-size:11.5px;line-height:11.5px;color:#f1f1f1;letter-spacing:-0.066px;font-weight:bold;">Advanced</span>
</body></html>
